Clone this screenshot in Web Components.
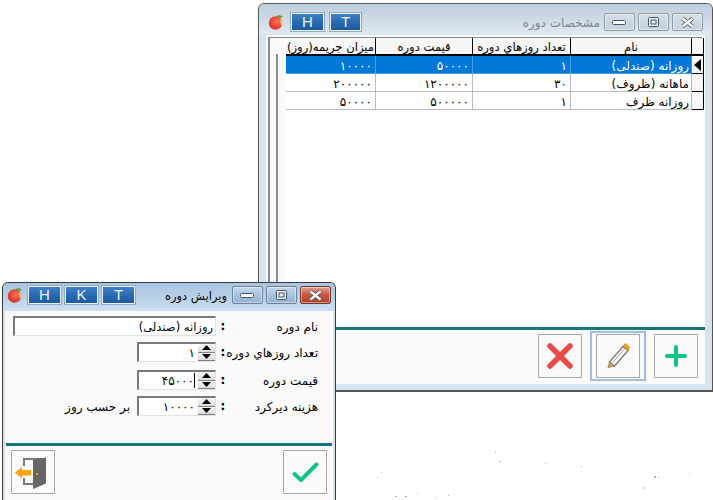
<!DOCTYPE html>
<html>
<head>
<meta charset="utf-8">
<style>
html,body{margin:0;height:100%;background:#fff;overflow:hidden;font-family:"DejaVu Sans",sans-serif;}
#desk{position:relative;width:713px;height:500px;overflow:hidden;}
</style>
</head>
<body>
<div id="desk">
<svg width="713" height="500" style="position:absolute;left:0;top:0" fill="#b4b4b4">
<rect x="495" y="452" width="1" height="1"/><rect x="499" y="461" width="2" height="1"/><rect x="545" y="463" width="1" height="1"/><rect x="581" y="466" width="1" height="1"/>
<rect x="381" y="472" width="1" height="1"/><rect x="377" y="477" width="1" height="1"/><rect x="395" y="496" width="2" height="1"/><rect x="405" y="496" width="2" height="1"/>
<rect x="417" y="493" width="1" height="1"/><rect x="435" y="497" width="1" height="1"/><rect x="448" y="495" width="1" height="1"/>
<rect x="654" y="476" width="2" height="2"/><rect x="658" y="477" width="1" height="1"/><rect x="689" y="473" width="1" height="1"/><rect x="644" y="487" width="1" height="2"/>
</svg>

<app-window id="back" style="left:258px;top:3px;width:455px;height:389px" inactive>
  <title-btn slot="tools">H</title-btn>
  <title-btn slot="tools" narrow>T</title-btn>
  <span slot="title">مشخصات دوره</span>
  <course-grid></course-grid>
  <div slot="footer" style="display:flex;gap:14px;justify-content:flex-end;padding:4px 7px 0 0">
    <tool-btn icon="del"></tool-btn>
    <tool-btn icon="edit" focused></tool-btn>
    <tool-btn icon="add"></tool-btn>
  </div>
</app-window>

<app-window id="front" style="left:2px;top:282px;width:334px;height:220px">
  <title-btn slot="tools">H</title-btn>
  <title-btn slot="tools">K</title-btn>
  <title-btn slot="tools">T</title-btn>
  <span slot="title">ویرایش دوره</span>
  <course-form></course-form>
  <div slot="footer" style="display:flex;justify-content:space-between;padding:4px 5px 0 5px">
    <tool-btn icon="exit"></tool-btn>
    <tool-btn icon="ok"></tool-btn>
  </div>
</app-window>
</div>

<template id="window-tpl">
<style>
:host{position:absolute;display:block;box-sizing:border-box;border:1px solid #3a3a3a;border-width:1px 1px 2px 1px;border-radius:6px 6px 0 0;background:#d6e4f2;color:#000;}
:host([inactive]){border-color:#555;}
.col{display:flex;flex-direction:column;height:100%;}
.bar{height:28px;box-sizing:border-box;flex:none;display:flex;align-items:flex-start;padding:3px 4px 0 4px;border-radius:5px 5px 0 0;background:linear-gradient(#a9c4e0,#bcd3ea 60%,#cfe0f1);}
:host([inactive]) .bar{background:linear-gradient(#bfcedc,#cfdbe7 55%,#dfe9f3);height:30px;padding:9px 9px 0 9px;}
.apple{flex:none;margin:1px 5px 0 0;}
:host([inactive]) .apple{margin-right:7px;}
.tools{display:flex;gap:4px;}
:host([inactive]) .tools{gap:6px;}
.title{flex:1;text-align:right;direction:rtl;font-size:11.5px;line-height:20px;padding-right:5px;color:#000;white-space:nowrap;}
:host([inactive]) .title{color:#7c858e;font-size:12px;padding-right:4px;}
.ctl{display:flex;gap:3px;}
.c{width:31px;height:18px;box-sizing:border-box;border:1px solid #6f8097;border-radius:2px;background:linear-gradient(#c5d8ec,#a8c3de 50%,#92b2d2);display:flex;align-items:center;justify-content:center;box-shadow:inset 0 0 0 1px rgba(255,255,255,.45);}
:host([inactive]) .c{border-color:#909aa5;background:linear-gradient(#d5dfe9,#c3d0dd);box-shadow:inset 0 0 0 1px rgba(255,255,255,.5);}
.c.x{background:linear-gradient(#e0a294,#c8553f 50%,#b53f2a);border-color:#6d3a32;}
:host([inactive]) .c.x{background:linear-gradient(#d5dfe9,#c3d0dd);border-color:#909aa5;}
.body{flex:1;min-height:0;margin:0 2px;background:#fafafa;display:flex;flex-direction:column;}
:host([inactive]) .body{margin:1px 7px 6px 7px;}
.main{flex:1;min-height:0;}
.foot{flex:none;height:54px;border-top:3px solid #17767c;margin:0 1px;}
:host([inactive]) .foot{margin:0;}
</style>
<div class="col">
  <div class="bar">
    <svg class="apple" width="16" height="16" viewBox="0 0 16 16">
      <defs><radialGradient id="ap" cx=".6" cy=".4" r=".7"><stop offset="0" stop-color="#f57a4e"/><stop offset=".7" stop-color="#e43a33"/><stop offset="1" stop-color="#c52a2a"/></radialGradient></defs>
      <circle cx="7.5" cy="9" r="6.7" fill="url(#ap)"/>
      <path d="M8 2.5C10 .8 13 1 15 3 12.5 4 10 3.8 8 2.5z" fill="#6c9c3a"/>
      <path d="M12 6a6 6 0 0 1 1.6 5" stroke="#f6c36a" stroke-width="1.6" fill="none"/>
    </svg>
    <div class="tools"><slot name="tools"></slot></div>
    <div class="title"><slot name="title"></slot></div>
    <div class="ctl">
      <div class="c"><svg width="15" height="7"><rect x=".5" y="1.5" width="13" height="4" rx="1" fill="#fff" stroke="#45566a"/></svg></div>
      <div class="c"><svg width="11" height="10"><rect x=".5" y=".5" width="10" height="9" rx="1" fill="#e8eef5" stroke="#45566a"/><rect x="3" y="3" width="5" height="4" fill="none" stroke="#45566a"/></svg></div>
      <div class="c x"><svg width="15" height="11" viewBox="0 0 15 11"><path d="M2.5 1.5L12.5 9.5M12.5 1.5L2.5 9.5" stroke="#4c4c4c" stroke-width="4"/><path d="M2.5 1.5L12.5 9.5M12.5 1.5L2.5 9.5" stroke="#fff" stroke-width="2.4"/></svg></div>
    </div>
  </div>
  <div class="body">
    <div class="main"><slot></slot></div>
    <div class="foot"><slot name="footer"></slot></div>
  </div>
</div>
</template>

<template id="titlebtn-tpl">
<style>
:host{display:block;width:33px;height:18px;box-sizing:border-box;border:1px solid #eef4fa;background:linear-gradient(#3f80c4,#2a6db4 45%,#1b5a9c);color:#eaf2fb;font:15px/16px "Liberation Sans",sans-serif;text-align:center;box-shadow:0 0 0 1px #8fabcc;}
:host([narrow]){width:31px;}
</style>
<slot></slot>
</template>

<template id="toolbtn-tpl">
<style>
:host{display:block;position:relative;width:44px;height:44px;box-sizing:border-box;border:1px solid #a8a8a8;background:#fafafa;}
:host([focused])::after{content:"";position:absolute;left:-7px;right:-7px;top:-4px;bottom:-4px;border:2px solid #a3bce0;}
svg{display:block;width:42px;height:42px;}
</style>
<span id="i"></span>
</template>

<template id="spin-tpl">
<style>
:host{display:flex;width:79px;height:20px;box-sizing:border-box;border:1px solid #e2e2e2;border-top:2px solid #7a7a7a;border-left:2px solid #7a7a7a;background:#fff;direction:ltr;}
.v{flex:1;text-align:right;font:12px/19px "DejaVu Sans",sans-serif;letter-spacing:1.2px;padding-right:3px;color:#000;white-space:nowrap;}
.s{width:17px;flex:none;display:flex;flex-direction:column;}
.s div{flex:1;box-sizing:border-box;background:linear-gradient(#f7f7f7,#dcdcdc);border-bottom:1px solid #808080;display:flex;align-items:center;justify-content:center;}
svg{display:block;}
.caret{display:inline-block;width:1px;height:15px;background:#000;vertical-align:-3px;}
</style>
<div class="v"><slot></slot></div>
<div class="s">
  <div><svg width="9" height="5"><path d="M4.5 0L9 5H0z" fill="#000"/></svg></div>
  <div><svg width="9" height="5"><path d="M0 0H9L4.5 5z" fill="#000"/></svg></div>
</div>
</template>

<template id="grid-tpl">
<style>
:host{display:block;height:100%;box-sizing:border-box;padding:2px 2px 0 2px;font-size:12px;}
.wrap{display:flex;height:100%;box-sizing:border-box;border:1px solid #fff;border-top:1px solid #8a8a8a;border-left:2px solid #8a8a8a;background:#fff;}
.gut{width:16px;flex:none;background:#fafafa;display:flex;justify-content:center;padding-top:16px;box-sizing:border-box;}
.gut i{display:block;width:2px;height:100%;background:#8c8c8c;margin-right:2px;}
.tbl{flex:1;display:grid;grid-template-columns:90px 97px 98px 121px 12px;grid-auto-rows:18px;grid-template-rows:18px;align-content:start;background:#fff;}
.h{background:#f7f7f7;border:1px solid #000;border-width:0 1px 2px 0;box-sizing:border-box;text-align:center;direction:rtl;font-size:11.6px;line-height:18px;white-space:nowrap;overflow:hidden;}
.d{border:1px solid #bcbcbc;border-width:0 1px 1px 0;box-sizing:border-box;direction:rtl;line-height:20px;white-space:nowrap;overflow:hidden;padding-right:2px;color:#000;}
.d.n{padding-right:3px;letter-spacing:1.2px;}
.sel{background:#0078d7;color:#fff;border-color:#4a9fe3;}
.ind{background:#f7f7f7;border:1px solid #000;border-width:0 1px 1px 0;box-sizing:border-box;display:flex;align-items:center;padding-left:2px;}
</style>
<div class="wrap">
  <div class="gut"><i></i></div>
  <div class="tbl" id="t"></div>
</div>
</template>

<template id="form-tpl">
<style>
:host{display:flex;flex-direction:column;height:100%;box-sizing:border-box;font-size:12px;padding:5px 9px 0 8px;color:#000;}
.row{display:grid;grid-template-columns:1fr 79px 14px 94px;height:20px;align-items:center;direction:ltr;margin-bottom:6px;}
.row:nth-child(3){margin-bottom:8px;}
.name{grid-column:1 / span 2;box-sizing:border-box;height:20px;border:1px solid #e2e2e2;border-top:2px solid #7a7a7a;border-left:2px solid #7a7a7a;background:#fff;direction:rtl;font-size:11.5px;line-height:19px;padding-right:2px;}
.colon{text-align:center;font-size:12px;font-weight:bold;}
.lab{direction:rtl;text-align:right;padding:1px 6px 0 0;white-space:nowrap;}
.unit{direction:rtl;text-align:right;padding:1px 7px 0 0;white-space:nowrap;}
</style>
<div class="row"><div class="name">روزانه (صندلی)</div><div class="colon">:</div><div class="lab">نام دوره</div></div>
<div class="row"><div></div><spin-edit>۱</spin-edit><div class="colon">:</div><div class="lab">تعداد روزهاي دوره</div></div>
<div class="row"><div></div><spin-edit caret>۴۵۰۰۰</spin-edit><div class="colon">:</div><div class="lab">قیمت دوره</div></div>
<div class="row"><div class="unit">بر حسب روز</div><spin-edit>۱۰۰۰۰</spin-edit><div class="colon">:</div><div class="lab">هزینه دیرکرد</div></div>
</template>

<script>
const ICONS={
del:'<path d="M11 11L31 31M31 11L11 31" stroke="#ea4b4b" stroke-width="5.5" stroke-linecap="round"/>',
add:'<path d="M21 12V30M12 21H30" stroke="#0fc48a" stroke-width="4" stroke-linecap="round"/>',
edit:'<path d="M12.5 27L26 11.5L31 15.5L17.5 31Z" fill="#fff" stroke="#7d7d7d" stroke-width="1.4"/><path d="M15.5 27.5L27.5 14" stroke="#9a9a9a"/><path d="M26 11L28.5 8.5L32.5 12L31 15.5Z" fill="#f4a21a" stroke="#b67a10" stroke-width=".6"/><path d="M12.5 27L17.5 31L11 32.5Z" fill="#f4a21a" stroke="#7d7d7d" stroke-width=".8"/>',
ok:'<path d="M10.5 23L17 29L32.5 13.5" fill="none" stroke="#0fc48a" stroke-width="4" stroke-linecap="round" stroke-linejoin="round"/>',
exit:'<path d="M12 15V8H33M12 27V33H22" fill="none" stroke="#7a7a7a" stroke-width="2"/><path d="M21 9L34 6.5V32.5L21 38Z" fill="#666"/><path d="M3 21.5L10 16V19H19V24.5H10V27.5Z" fill="#ffa50a"/><rect x="24" y="22" width="2" height="2" fill="#e89a10"/>'
};

class AppWindow extends HTMLElement{
  constructor(){
    super();
    this.attachShadow({mode:'open'});
    this.shadowRoot.append(document.getElementById('window-tpl').content.cloneNode(true));
  }
}
class TitleBtn extends HTMLElement{
  constructor(){
    super();
    this.attachShadow({mode:'open'});
    this.shadowRoot.append(document.getElementById('titlebtn-tpl').content.cloneNode(true));
  }
}
class ToolBtn extends HTMLElement{
  constructor(){
    super();
    this.attachShadow({mode:'open'});
    this.shadowRoot.append(document.getElementById('toolbtn-tpl').content.cloneNode(true));
  }
  connectedCallback(){
    const ic=ICONS[this.getAttribute('icon')]||'';
    this.shadowRoot.querySelector('#i').innerHTML='<svg viewBox="0 0 42 42">'+ic+'</svg>';
  }
}
class SpinEdit extends HTMLElement{
  constructor(){
    super();
    this.attachShadow({mode:'open'});
    this.shadowRoot.append(document.getElementById('spin-tpl').content.cloneNode(true));
  }
  connectedCallback(){
    if(this.hasAttribute('caret')){
      const c=document.createElement('span');
      c.className='caret';
      this.shadowRoot.querySelector('.v').append(c);
    }
  }
}
class CourseForm extends HTMLElement{
  constructor(){
    super();
    this.attachShadow({mode:'open'});
    this.shadowRoot.append(document.getElementById('form-tpl').content.cloneNode(true));
  }
}
class CourseGrid extends HTMLElement{
  constructor(){
    super();
    this.attachShadow({mode:'open'});
    this.shadowRoot.append(document.getElementById('grid-tpl').content.cloneNode(true));
  }
  connectedCallback(){
    const heads=['میزان جریمه(روز)','قیمت دوره','تعداد روزهاي دوره','نام'];
    const rows=[
      ['۱۰۰۰۰','۵۰۰۰۰','۱','روزانه (صندلی)'],
      ['۲۰۰۰۰۰','۱۲۰۰۰۰۰','۳۰','ماهانه (ظروف)'],
      ['۵۰۰۰۰','۵۰۰۰۰۰','۱','روزانه ظرف']
    ];
    let html=heads.map(h=>'<div class="h">'+h+'</div>').join('')+'<div class="h"></div>';
    rows.forEach((r,i)=>{
      r.forEach((v,j)=>{
        let cls='d';
        if(j<3) cls+=' n';
        if(i==0) cls+=' sel';
        html+='<div class="'+cls+'">'+v+'</div>';
      });
      html+='<div class="ind">'+(i==0?'<svg width="7" height="12"><path d="M7 0V12L0 6z" fill="#000"/></svg>':'')+'</div>';
    });
    this.shadowRoot.querySelector('#t').innerHTML=html;
  }
}
customElements.define('app-window',AppWindow);
customElements.define('title-btn',TitleBtn);
customElements.define('tool-btn',ToolBtn);
customElements.define('spin-edit',SpinEdit);
customElements.define('course-form',CourseForm);
customElements.define('course-grid',CourseGrid);
</script>
</body>
</html>
